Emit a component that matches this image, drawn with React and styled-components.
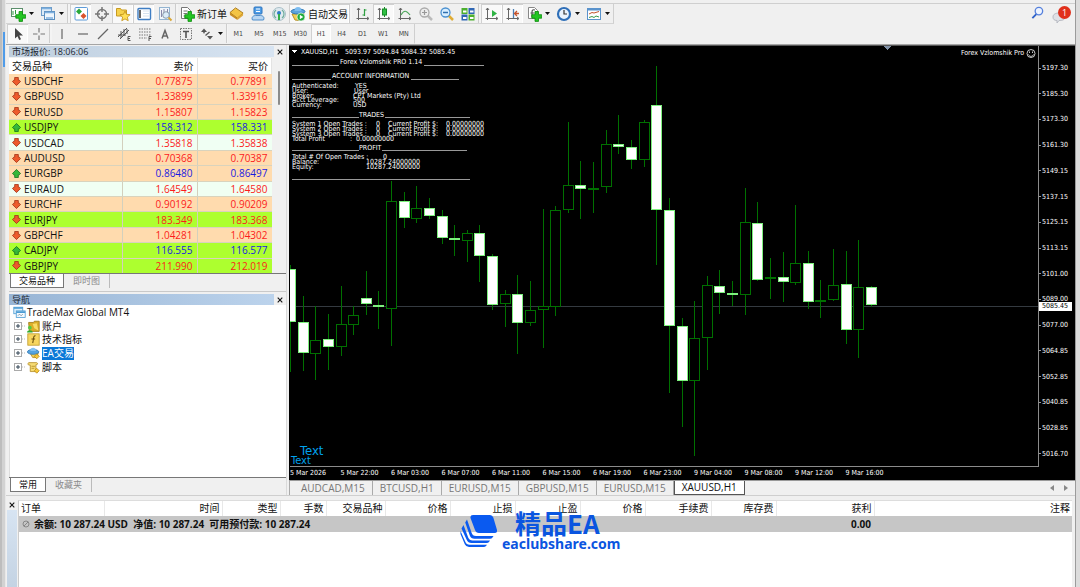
import React from "react";
import styled, { createGlobalStyle, css } from "styled-components";

const UI = `"Open Sans", "Noto Sans CJK SC", sans-serif`;
const CHART = `"DejaVu Sans Condensed", "DejaVu Sans", sans-serif`;

const GlobalStyle = createGlobalStyle`
  * { box-sizing: border-box; }
  body { margin: 0; background: #f0f0f0; font: 10px/14px ${UI}; color: #111; }
  button { font: inherit; color: inherit; margin: 0; padding: 0; border: 0; background: none; }
  table { border-collapse: collapse; border-spacing: 0; }
  svg { display: block; flex: none; }
`;

/* ---------- frame ---------- */
const Desktop = styled.div`
  display: grid;
  grid-template-columns: 6px minmax(0, 1fr) 5px;
  min-height: 100vh;
`;
const LeftEdge = styled.div`
  background: linear-gradient(90deg, #bdbdbd 0 2px, #d2d2d2 2px 5px, #e8e8e8 5px);
  padding: 32px 1px 0 3px;
`;
const EdgeMark = styled.div`
  height: 35px;
  background: #4f9be8;
`;
const RightEdge = styled.div`
  border-left: 1px solid #9b9b9b;
  background: #dcdcdc;
`;
const Window = styled.main`
  display: flex;
  flex-direction: column;
  min-width: 0;
  background: #f0f0f0;
`;
const MenuEdge = styled.div`
  height: 4px;
  border-bottom: 1px solid #cfcfcf;
`;

/* ---------- toolbars ---------- */
const Toolbar = styled.div`
  display: flex;
  align-items: stretch;
  width: max-content;
  height: 20px;
  padding-left: 1px;
  border-right: 1px solid #cfcfcf;
  border-bottom: 1px solid ${(p) => (p.$last ? "transparent" : "#d4d4d4")};
`;
const Divider = styled.span`
  width: ${(p) => p.$w || 3}px;
  border-left: 1px solid #cdcdcd;
  background: #f4f4f4;
`;
const ToolButton = styled.button`
  display: flex;
  align-items: center;
  justify-content: center;
  width: 21px;
  ${(p) => p.$on && css`background: #f9f9f9; box-shadow: inset 1px 1px 0 #d0d0d0, inset -1px 0 0 #fff;`}
`;
const MenuButton = styled(ToolButton)`
  width: 30px;
  justify-content: flex-start;
  gap: 3px;
  padding-left: 3px;
`;
const TextButton = styled(ToolButton)`
  width: ${(p) => p.$w}px;
  justify-content: flex-start;
  gap: 2px;
  padding-left: 1px;
  white-space: nowrap;
`;
const ButtonGroup = styled.div`
  display: flex;
  width: ${(p) => p.$w}px;
  & > button { flex: 1; width: auto; min-width: 0; }
`;
const Timeframe = styled(ToolButton)`
  font: 7px/10px ${CHART};
  color: #444;
`;
const ToolbarRow = styled.div`
  display: flex;
  justify-content: space-between;
`;
const Tray = styled.div`
  display: flex;
  align-items: flex-start;
  gap: 4px;
  padding: 1px 3px 0 0;
`;
const Bell = styled.button`
  position: relative;
  display: grid;
  place-items: center start;
  width: 20px;
  height: 20px;
`;
const Badge = styled.span`
  position: absolute;
  top: 1px;
  right: 1px;
  width: 13px;
  height: 13px;
  border-radius: 50%;
  background: #e0301c;
  color: #fff;
  font: 9px/13px ${UI};
  text-align: center;
`;

/* ---------- workspace ---------- */
const Workspace = styled.div`
  display: grid;
  grid-template-columns: 281px minmax(0, 1fr);
  column-gap: 2px;
  flex: 1;
  border-top: 1px solid #a5a5a5;
`;
const Side = styled.aside`
  display: flex;
  flex-direction: column;
  padding: 1px 0 3px 3px;
  border-right: 1px solid #dadada;
`;
const Panel = styled.section`
  display: flex;
  flex-direction: column;
  ${(p) => p.$grow && css`flex: 1; border-top: 1px solid #c9c9c9; margin-top: 3px; padding-top: 2px;`}
`;
const PanelTitle = styled.header`
  display: flex;
  height: 11px;
  color: #1c2833;
  & > h2 {
    flex: 1;
    margin: 0;
    padding-left: 3px;
    font: 9px/11px ${UI};
    background: ${(p) => (p.$active ? "linear-gradient(90deg,#98b5d5,#bcd3ec)" : "linear-gradient(90deg,#bfcfdf,#d7e4f2)")};
  }
`;
const CloseButton = styled.button`
  display: grid;
  place-items: center;
  width: 12px;
  height: 11px;
`;
const Quotes = styled.div`
  display: grid;
  grid-template-columns: 263px 1fr;
  height: 216px;
`;
const QuoteTable = styled.table`
  width: 100%;
  height: 216px;
  table-layout: fixed;
  background: #fff;
  line-height: 12px;
  margin-top: 1px;
  th { font-weight: 400; text-align: right; padding: 0 3px; border-right: 1px solid #e3e3e3; height: 16px; }
  th:first-child { text-align: left; }
`;
const ROW_BG = { peach: "#ffdbae", green: "#adff2f", mint: "#f0fff3" };
const QuoteRow = styled.tr`
  background: ${(p) => ROW_BG[p.$tone]};
  td {
    padding: 0 4px 0 3px;
    text-align: right;
    color: ${(p) => (p.$up ? "#1a1ae0" : "#fb1c1c")};
    border-right: 1px solid #d3d0bd;
    border-bottom: 1px solid #d9d3bd;
  }
  td:first-child { color: #111; text-align: left; }
  td:last-child { border-right: 0; }
`;
const Symbol = styled.span`
  display: flex;
  align-items: center;
  gap: 3px;
`;
const Scroll = styled.div`
  padding: 14px 0 0 6px;
`;
const Thumb = styled.div`
  width: 2px;
  height: 34px;
  border-radius: 1px;
  background: #8b8b8b;
`;
const PanelTabs = styled.div`
  display: flex;
  height: 15px;
  padding-left: 1px;
  border-top: 1px solid #777;
`;
const PanelTab = styled.button`
  padding: 0 9px;
  color: ${(p) => (p.$on ? "#111" : "#8a8a8a")};
  font-size: 9px;
  line-height: 14px;
  ${(p) =>
    p.$on
      ? css`background: #fff; border: 1px solid #777; border-top: 0; padding: 0 8px;`
      : css`border-right: 1px solid #bbb;`}
`;
const Tree = styled.ul`
  flex: 1;
  margin: 0;
  padding: 1px 0 0 3px;
  list-style: none;
  background: #fff;
  border-left: 1px solid #ddd;
`;
const TreeRows = styled.div`
  display: flex;
  flex-direction: column;
  height: 68px;
`;
const TreeItem = styled.li`
  display: flex;
  flex: 1;
  align-items: center;
  gap: ${(p) => (p.$root ? 1 : 2)}px;
  padding-left: ${(p) => (p.$root ? 0 : 1)}px;
`;
const TreeLabel = styled.span`
  line-height: 13px;
  ${(p) => p.$on && css`background: #0a78d7; color: #fff;`}
`;

/* ---------- chart ---------- */
const ChartColumn = styled.div`
  display: flex;
  flex-direction: column;
  min-width: 0;
`;
const ChartFrame = styled.figure`
  flex: 1;
  display: grid;
  grid-template: minmax(420px, 1fr) 13px / minmax(0, 1fr) 36px;
  margin: 0;
  padding: 0 0 0 1px;
  background: #000;
  color: #fff;
  font: 7px/10px ${CHART};
  border-top: 1px solid #555;
`;
const Plot = styled.div`
  border: 1px solid #8b8b8b;
  border-width: 0 1px 1px 0;
  overflow: hidden;
  & > svg { width: 100%; height: 100%; }
`;
const PriceAxis = styled.div`
  position: relative;
  display: flex;
  flex-direction: column;
  justify-content: space-between;
  padding: 17px 0 8px;
  & > span { display: flex; align-items: center; gap: 1px; }
  & > span::before { content: ""; width: 2px; height: 1px; background: #999; }
`;
const PriceTag = styled.output`
  position: absolute;
  top: 256px;
  left: 0;
  width: 33px;
  padding-left: 3px;
  background: #fff;
  color: #000;
  line-height: 9px;
`;
const TimeAxis = styled.div`
  display: flex;
  grid-column: 1 / -1;
  line-height: 13px;
  white-space: nowrap;
  & > div { display: grid; grid-template-columns: repeat(12, minmax(0, 1fr)); width: 606px; }
`;
const ChartTabs = styled.nav`
  display: flex;
  height: 15px;
  padding-left: 4px;
  border-top: 1px solid #999;
  border-left: 1px solid #aaa;
`;
const ChartTab = styled.button`
  padding: 0 7px;
  line-height: 13px;
  color: #777;
  border-right: 1px solid #aaa;
  ${(p) => p.$on && css`background: #fff; color: #111; border: 1px solid #555; border-top: 0;`}
`;
const TabScroll = styled.div`
  display: flex;
  align-items: center;
  gap: 10px;
  margin-left: auto;
  padding-right: 7px;
`;

/* ---------- terminal ---------- */
const Terminal = styled.section`
  position: relative;
  display: grid;
  grid-template-columns: 12px minmax(0, 1fr);
  min-height: 92px;
  padding-right: 3px;
  border-top: 1px solid #cfcfcf;
`;
const TerminalRail = styled.div`
  display: flex;
  flex-direction: column;
  padding: 3px 1px 0 0;
  &::after { content: ""; flex: 1; margin-left: 1px; background: linear-gradient(#d7e4f2, #c4d3e3); }
`;
const TerminalBody = styled.div`
  margin-top: 4px;
  background: #fff;
  border-left: 1px solid #ccc;
  border-top: 1px solid #ddd;
`;
const Orders = styled.table`
  width: 100%;
  table-layout: fixed;
  line-height: 15px;
  white-space: nowrap;
  th { font-weight: 400; text-align: right; padding: 0 2px; border-right: 1px solid #e8e8e8; height: 15px; }
  th:first-child { text-align: left; }
  th:last-child { border-right: 0; }
  td { height: 16px; padding: 0 3px; font-weight: 700; text-align: right; background: #c6c6c6; }
  td:first-child { text-align: left; }
`;
const Balance = styled.span`
  display: flex;
  align-items: center;
  gap: 4px;
  white-space: pre;
`;
const Watermark = styled.div`
  position: absolute;
  left: 454px;
  top: 14px;
  display: flex;
  align-items: center;
  gap: 5px;
  color: #0a55e0;
  font: 700 14px/16px "Noto Sans", sans-serif;
`;
const Brand = styled.div`
  padding-left: 13px;
  font: 700 26px/26px "Noto Sans CJK SC", sans-serif;
`;

/* ---------- icons ---------- */
const Ico = ({ s = 16, children }) => (
  <svg width={s} height={s} viewBox="0 0 16 16" fill="none" aria-hidden="true">{children}</svg>
);
const Caret = () => (
  <svg width="5" height="3" viewBox="0 0 5 3" aria-hidden="true"><path d="M0 0h5L2.5 3z" fill="#111" /></svg>
);
const Cross = () => (
  <svg width="6" height="6" viewBox="0 0 6 6" aria-hidden="true"><path d="M.7.7l4.6 4.6M5.3.7L.7 5.3" stroke="#111" strokeWidth="1.1" /></svg>
);
const plus = <path d="M9 5.500h3.500v3.200h3.200v3.500h-3.200v3.200H9v-3.200H5.800V8.700H9z" fill="#23c523" stroke="#0b8a0b" strokeWidth=".8" />;
const axes = <path d="M3.500 2v12M1.500 12.500h12M2 4l1.500-2L5 4M12 11l2 1.500-2 1.500" stroke="#666" />;
const icons = {
  newChart: <Ico><rect x="1.500" y="2.500" width="11" height="8" fill="#fff" stroke="#5b8f6b" /><path d="M3 5v4M5.500 4v4" stroke="#2b9a3e" />{plus}</Ico>,
  profiles: <Ico><rect x="1.500" y="1.500" width="10" height="8" fill="#dcebf8" stroke="#6c9cc9" /><rect x="4.500" y="5.500" width="10" height="8" fill="#eef6fd" stroke="#5a8dbd" /><path d="M4.500 6.500h10M2 2.500h9M6 12h7" stroke="#7eb0df" strokeWidth="1.500" /></Ico>,
  market: <Ico><rect x="2" y="1.500" width="12.500" height="12.500" rx="1" fill="#fff" stroke="#5c9ad8" /><path d="M6 2.500L9 5.500 6 8.500 3 5.500z" fill="#28a83a" /><path d="M10.500 7l3 3-3 3-3-3z" fill="#d9532c" /></Ico>,
  aim: <Ico><circle cx="8" cy="8" r="4.500" stroke="#777" strokeWidth="1.500" /><path d="M8 1v5M8 10v5M1 8h5M10 8h5" stroke="#777" strokeWidth="1.500" /></Ico>,
  navigator: <Ico><path d="M1.500 2.500h4l1 1.500h5v6h-10z" fill="#f6d24c" stroke="#c79a22" /><path d="M10 5l1.500 3.300 3.600.4-2.700 2.400.8 3.600-3.200-1.800-3.200 1.800.8-3.600L4.900 8.700l3.600-.4z" fill="#ffdf55" stroke="#c08f17" strokeWidth=".8" /></Ico>,
  terminal: <Ico><rect x="2" y="2.500" width="12.500" height="11" rx="1" fill="#fff" stroke="#3f7ec4" strokeWidth="1.400" /><path d="M4 4v8" stroke="#333" strokeWidth="1.500" /><path d="M7 5h6M7 7.500h6M7 10h6" stroke="#d5e2f0" /></Ico>,
  tester: <Ico><rect x="2.500" y="1.500" width="10" height="12" fill="#f1f6fb" stroke="#93b4d1" /><path d="M4.500 4v7M7 3v5M10.500 3v4" stroke="#88a" /><circle cx="9" cy="9" r="3.300" fill="#d7ebfa" fillOpacity=".8" stroke="#8a9bab" /><path d="M11.500 11.500l3 3" stroke="#d9a636" strokeWidth="2" /></Ico>,
  order: <Ico><path d="M2.500 1.500h6l3 3v8h-9z" fill="#fff" stroke="#777" /><path d="M4.500 5h4M4.500 7.500h4M4.500 10h3" stroke="#777" />{plus}</Ico>,
  gold: <Ico s={15}><path d="M1 7l6-5 8 5.500-6 5.500z" fill="#f3c443" stroke="#a9761a" /><path d="M1 7v2.500L9 15v-2z" fill="#c88d22" /><path d="M9 13v2l6-5V7.500z" fill="#e0a93a" /></Ico>,
  user: <Ico><rect x="4" y="1" width="8" height="7" rx="1" fill="#4f9ee8" stroke="#2f74bd" /><path d="M6 3h4M6 5.500h4" stroke="#fff" /><path d="M2.500 14c-1.500-3 1-4.500 3-4.500h5c2 0 4.500 1.500 3 4.500z" fill="#b9d6f2" stroke="#4f8ecb" /></Ico>,
  signal: <Ico><circle cx="8" cy="8" r="6.500" fill="#dfe9ef" stroke="#a9bfc8" /><path d="M5 12a5 5 0 010-8M11 4a5 5 0 010 8" stroke="#6fae9b" strokeWidth="1.200" /><circle cx="8" cy="7" r="2" fill="#2e7ac4" /><path d="M8 8v6" stroke="#35b04a" strokeWidth="2" /></Ico>,
  auto: <Ico><path d="M2 8l3 6 5 .5 4-7z" fill="#f1cf55" stroke="#b48d25" /><ellipse cx="8" cy="5.500" rx="7" ry="2.500" fill="#5ba3dc" stroke="#2f78b4" /><path d="M4.500 5a3.500 4 0 017 0z" fill="#7cbcf0" /><circle cx="11" cy="11" r="4" fill="#1faa3b" stroke="#fff" strokeWidth=".6" /><path d="M9.800 8.800l3.500 2.200-3.500 2.200z" fill="#fff" /></Ico>,
  bars: <Ico>{axes}<path d="M9.500 3v7M9.500 4h2M7.500 9h2" stroke="#2fa042" strokeWidth="1.200" /></Ico>,
  candles: <Ico>{axes}<path d="M8.500 1v10" stroke="#178a26" /><rect x="6.500" y="3" width="4" height="6" fill="#2fc043" stroke="#178a26" /></Ico>,
  line: <Ico>{axes}<path d="M4 9c3-5 5-5 9 0" stroke="#4aa658" strokeWidth="1.200" /></Ico>,
  zoomIn: <Ico><path d="M9.500 9.500l4.500 4.500" stroke="#bbb" strokeWidth="2.500" /><circle cx="6.500" cy="6.500" r="4.500" fill="#eee" stroke="#aaa" strokeWidth="1.300" /><path d="M4 6.500h5M6.500 4v5" stroke="#999" strokeWidth="1.200" /></Ico>,
  zoomOut: <Ico><path d="M9.500 9.500l4.500 4.500" stroke="#dfac35" strokeWidth="2.500" /><circle cx="6.500" cy="6.500" r="4.500" fill="#d8eeff" stroke="#4a90d0" strokeWidth="1.300" /><path d="M4 6.500h5" stroke="#2f6fae" strokeWidth="1.500" /></Ico>,
  tile: <Ico><rect x="1.500" y="2" width="6" height="6" fill="#4caf2f" /><rect x="8.500" y="2" width="6" height="6" fill="#2f66b4" /><rect x="1.500" y="8.500" width="6" height="6" fill="#2f66b4" /><rect x="8.500" y="8.500" width="6" height="6" fill="#4caf2f" /><path d="M3 5.500h3.500M10 5.500h3.500M3 12h3.500M10 12h3.500" stroke="#fff" strokeWidth="2" /></Ico>,
  scroll: <Ico>{axes}<path d="M8 4l5 3.500L8 11z" fill="#2fb344" /></Ico>,
  shift: <Ico>{axes}<path d="M8.500 3v9" stroke="#4a7fb5" strokeWidth="1.300" /><path d="M14 7.500h-4M12 5l-2.500 2.500L12 10" stroke="#c6542c" strokeWidth="1.300" /></Ico>,
  indicators: <Ico><path d="M2.500 1.500h6l3 3v8h-9z" fill="#fff" stroke="#888" /><path d="M9 4c-3-1-3 1-3 3v4M4.500 7h4" stroke="#555" strokeWidth="1.200" />{plus}</Ico>,
  clock: <Ico><circle cx="8" cy="8" r="6" fill="#e9f3fd" stroke="#2f6fb8" strokeWidth="2.200" /><path d="M8 4v4h3" stroke="#333" strokeWidth="1.200" /></Ico>,
  template: <Ico><rect x="1.500" y="2.500" width="13" height="11" fill="#fff" stroke="#5a93cc" /><path d="M2 3.500h12" stroke="#5a93cc" strokeWidth="2" /><path d="M3 8l3-1.500 2 .5 5-1.500" stroke="#c4532c" /><path d="M3 11.500l3-1 2 1L10 10l3 1" stroke="#3a9a4a" /></Ico>,
  cursor: <Ico><path d="M5 2v10.500l2.500-2.300 1.700 3.800 1.800-.8-1.700-3.700H13z" fill="#444" /></Ico>,
  cross: <Ico><path d="M8 2v4.500M8 9.500V14M2 8h4.500M9.500 8H14" stroke="#777" strokeWidth="1.200" /></Ico>,
  vline: <Ico><path d="M8 3v10" stroke="#666" strokeWidth="1.200" /></Ico>,
  hline: <Ico><path d="M3 8h10" stroke="#666" strokeWidth="1.200" /></Ico>,
  trend: <Ico><path d="M3 13L13 3" stroke="#666" strokeWidth="1.200" /></Ico>,
  channel: <Ico><path d="M2 11L11 2M4 13l9-9M5 5v7M8 3v7M11 3v5M2 9h8" stroke="#555" /><path d="M14.500 10.500H12v4h2.500M12 12.500h2" stroke="#555" /></Ico>,
  fib: <Ico><path d="M2 3h12M2 6h12M2 9h12M2 12h8" stroke="#777" strokeDasharray="1.500 1" /><path d="M14.500 10.500H12v4.500M12 12.500h2" stroke="#555" /></Ico>,
  letter: <Ico><path d="M5 12.500L8 4.500l3 8M6 10h4" stroke="#666" strokeWidth="1.500" /></Ico>,
  label: <Ico><rect x="2.500" y="2.500" width="11" height="11" stroke="#777" strokeDasharray="1.500 1" /><path d="M5 5.500h6M8 5.500V12" stroke="#555" strokeWidth="1.600" /></Ico>,
  arrows: <Ico><path d="M5 2.500l3 3.500H6l-1 2-1-2H2z" fill="#555" /><path d="M11 13.500L8 10h6z" fill="#555" /><path d="M6.500 9.500l4-3.500" stroke="#555" strokeWidth="1.300" /></Ico>,
  search: <Ico s={15}><path d="M7 9.500L2.500 14" stroke="#2f62c9" strokeWidth="2" /><circle cx="9.500" cy="6.500" r="4" fill="#eef4ff" stroke="#5580dc" strokeWidth="1.400" /></Ico>,
  bubble: <Ico><path d="M1 10c0-3 3-4 6-4s6 1 6 4-3 3.500-6 3.500L5 16v-2.500C2 13.500 1 12 1 10z" fill="#dfe1e6" stroke="#b7bac2" /></Ico>,
};
const TickArrow = ({ up }) => (
  <svg width="9" height="9" viewBox="0 0 10 10" aria-hidden="true">
    <path d={up ? "M5 .5L9.500 5 8 6.500H7v3H3v-3H2L.5 5z" : "M5 9.500L.5 5 2 3.500h1v-3h4v3h1L9.500 5z"} fill={up ? "#35b83a" : "#ee5a2c"} stroke={up ? "#14701c" : "#9e2f12"} strokeWidth=".9" />
  </svg>
);
const Expander = () => (
  <svg width="11" height="9" viewBox="0 0 11 9" aria-hidden="true">
    <rect x=".5" y=".5" width="7" height="7" fill="#fff" stroke="#aaa" /><path d="M2 4h4M4 2v4" stroke="#345" /><path d="M8 4h3" stroke="#bbb" strokeDasharray="1 1" />
  </svg>
);
const treeIcons = {
  root: <Ico s={13}><rect x="1" y="1.500" width="11" height="8" fill="#dff0fb" stroke="#4a9bd4" /><rect x="4" y="6" width="11" height="8" fill="#f5fbff" stroke="#4a9bd4" /><path d="M1 2.500h11M4 7.500h11" stroke="#4a9bd4" strokeWidth="2" /><path d="M6 12l2-2 2 2 2-2" stroke="#789" /></Ico>,
  accounts: <Ico s={13}><path d="M2 3h6l1-1.500h6V14H3z" fill="#dcae28" stroke="#9c7612" /><path d="M7 5l5-1 2 9-5-3z" fill="#f8dc65" /><circle cx="3.500" cy="9.500" r="2.300" fill="#53c943" /><path d="M0 15.500c0-4 7-4 7 0z" fill="#2fab2f" /></Ico>,
  indicators: <Ico s={13}><rect x="1" y="1" width="14" height="14" fill="#f7d660" stroke="#bf9925" /><path d="M10.500 3.500c-3-.5-2 3-3.500 9M5.500 7.500H10" stroke="#6b4f0d" strokeWidth="1.300" /></Ico>,
  experts: <Ico s={13}><path d="M4 8l3 5h5l2-6z" fill="#f1cf55" stroke="#b48d25" /><ellipse cx="7.500" cy="6" rx="7" ry="3" fill="#55a3df" stroke="#2f78b4" /><path d="M4 5a3.500 4 0 017 0z" fill="#82c1f2" /><path d="M12 8.500l3 3-3 3-3-3z" fill="#f8c93a" stroke="#b98b18" /></Ico>,
  scripts: <Ico s={13}><path d="M2 2h10c2 1 1 3-1 2.500V13H4V5H2C1 4 1 3 2 2z" fill="#f6dc75" stroke="#b48d25" /><path d="M5.500 6.500H10M5.500 9H9" stroke="#b48d25" /><path d="M12 9l3 3-3 3-3-3z" fill="#f8c93a" stroke="#b98b18" /></Ico>,
};

/* ---------- data ---------- */
const quotes = [
  ["USDCHF", "0.77875", "0.77891", "peach", 0], ["GBPUSD", "1.33899", "1.33916", "peach", 0],
  ["EURUSD", "1.15807", "1.15823", "peach", 0], ["USDJPY", "158.312", "158.331", "green", 1],
  ["USDCAD", "1.35818", "1.35838", "mint", 0], ["AUDUSD", "0.70368", "0.70387", "peach", 0],
  ["EURGBP", "0.86480", "0.86497", "peach", 1], ["EURAUD", "1.64549", "1.64580", "mint", 0],
  ["EURCHF", "0.90192", "0.90209", "peach", 0], ["EURJPY", "183.349", "183.368", "green", 0],
  ["GBPCHF", "1.04281", "1.04302", "peach", 0], ["CADJPY", "116.555", "116.577", "green", 1],
  ["GBPJPY", "211.990", "212.019", "green", 0],
];
// Each candle: high, body top, body bottom, low (plot pixels) and 1 for a falling (filled) body.
const candles = [
  [219, 223, 276, 326, 1], [250, 276, 307, 325, 1], [260, 294, 308, 334, 0], [268, 293, 301, 324, 1],
  [240, 278, 301, 310, 0], [260, 269, 279, 289, 0], [225, 252, 258, 269, 1], [245, 259, 261, 283, 1],
  [135, 155, 263, 300, 0], [146, 155, 172, 182, 1], [140, 162, 173, 177, 0], [152, 162, 170, 173, 1],
  [164, 170, 192, 198, 1], [179, 192, 194, 210, 1], [184, 187, 195, 216, 0], [179, 187, 210, 236, 1],
  [208, 210, 259, 264, 1], [244, 248, 258, 281, 0], [229, 248, 277, 308, 1], [235, 264, 277, 280, 0],
  [163, 260, 264, 302, 0], [160, 164, 261, 270, 0], [76, 139, 164, 167, 0], [115, 139, 143, 173, 1],
  [116, 142, 143, 167, 0], [84, 98, 141, 147, 0], [69, 98, 101, 108, 1], [94, 101, 114, 123, 1],
  [74, 76, 114, 121, 0], [20, 59, 164, 219, 1], [152, 164, 280, 347, 1], [272, 280, 335, 381, 1],
  [255, 292, 335, 410, 0], [230, 239, 292, 324, 0], [224, 240, 247, 268, 1], [235, 247, 249, 260, 1],
  [142, 176, 249, 269, 0], [156, 177, 234, 235, 1], [212, 231, 233, 253, 0], [206, 231, 236, 256, 1],
  [159, 217, 237, 239, 0], [205, 217, 256, 263, 1], [234, 254, 255, 272, 0], [203, 239, 254, 255, 0],
  [205, 238, 284, 298, 1], [194, 241, 284, 312, 0], [240, 241, 259, 261, 1],
];
const STEP = 12.63;
const chartLabels = [
  [11, 8, "XAUUSD,H1"], [55, 8, "5093.97 5094.84 5084.32 5085.45"],
  [50, 18, "Forex Vzlomshik PRO 1.14"], [42, 32, "ACCOUNT INFORMATION"],
  [2, 42, "Authenticated:"], [65, 42, "YES"], [2, 47, "User:"], [64, 47, "User"],
  [2, 52, "Broker:"], [63, 52, "CPT Markets (Pty) Ltd"], [2, 56, "Acct Leverage:"], [63, 56, "500"],
  [2, 61, "Currency:"], [63, 61, "USD"], [69, 71, "TRADES"],
  ...[1, 2, 3].flatMap((n, i) => {
    const y = 80 + i * 5;
    return [[2, y, `System ${n} Open Trades :`], [86, y, "0"], [98, y, "Current Profit $:"], [156, y, "0.00000000"]];
  }),
  [2, 95, "Total Profit"], [60, 95, ":"], [66, 95, "0.00000000"], [69, 104, "PROFIT"],
  [2, 113, "Total # Of Open Trades :"], [93, 113, "0"],
  [2, 118, "Balance:"], [76, 118, "10287.24000000"], [2, 123, "Equity:"], [76, 123, "10287.24000000"],
];
const rules = [
  [2, 49, 19], [134, 194, 19], [2, 41, 33], [121, 169, 33], [2, 69, 71], [95, 180, 71],
  [2, 69, 104], [92, 177, 104], [2, 180, 133],
];
const prices = ["5197.30", "5185.30", "5173.30", "5161.30", "5149.15", "5137.15", "5125.15", "5113.15", "5101.00", "5089.00", "5077.00", "5064.85", "5052.85", "5040.85", "5028.85", "5016.70"];
const times = ["5 Mar 2026", "5 Mar 22:00", "6 Mar 03:00", "6 Mar 07:00", "6 Mar 11:00", "6 Mar 15:00", "6 Mar 19:00", "6 Mar 23:00", "9 Mar 04:00", "9 Mar 08:00", "9 Mar 12:00", "9 Mar 16:00"];
const orderCols = [["订单", 85], ["时间", 118], ["类型", 58], ["手数", 46], ["交易品种", 59], ["价格", 65], ["止损", 65], ["止盈", 65], ["价格", 65], ["手续费", 66], ["库存费", 65], ["获利", 98], ["注释"]];

const Tool = ({ icon, on, label }) => <ToolButton $on={on} aria-label={label || icon}>{icons[icon]}</ToolButton>;
const Menu = ({ icon }) => <MenuButton aria-label={icon}>{icons[icon]}<Caret /></MenuButton>;

function ChartDrawing() {
  return (
    <svg role="img" aria-label="XAUUSD,H1" shapeRendering="crispEdges">
      <line x1="0" x2="100%" y1="260.5" y2="260.5" stroke="#343a40" />
      {candles.map(([hi, top, bottom, lo, down], i) => {
        const x = Math.round(i * STEP);
        return (
          <g key={i}>
            <path d={`M${x + 0.5} ${hi}V${lo}`} stroke="#007000" />
            <rect x={x - 4.5} y={top + 0.5} width="10" height={Math.max(bottom - top - 1, 1)} fill={down ? "#fff" : "#000"} stroke={down ? "#7df07d" : "#007000"} />
          </g>
        );
      })}
      {rules.map(([a, b, y]) => <line key={`${a}-${y}`} x1={a} x2={b} y1={y + 0.5} y2={y + 0.5} stroke="#999" />)}
      <path d="M2 4h5L4.500 7z" fill="#fff" />
      <path d="M593 0h8l-4 4z" fill="#8090a5" />
      <g fill="#fff">{chartLabels.map(([x, y, t], i) => <text key={i} x={x} y={y}>{t}</text>)}</g>
      <g fill="#00a2ee">
        <text x="10" y="409" fontSize="13">Text</text>
        <text x="1" y="418" fontSize="11">Text</text>
      </g>
      <text x="100%" dx="-14" y="9" textAnchor="end" fill="#fff">Forex Vzlomshik Pro</text>
      <svg x="100%" overflow="visible" shapeRendering="auto">
        <g fill="none" stroke="#ddd" strokeWidth=".9">
          <circle cx="-7" cy="7.500" r="4" /><path d="M-9.500 8.500c1 2.500 4 2.500 5 0M-8.500 5.500v1.500M-5.500 5.500v1.500" />
        </g>
      </svg>
    </svg>
  );
}

export default function App() {
  return (
    <Desktop>
      <GlobalStyle />
      <LeftEdge><EdgeMark /></LeftEdge>
      <Window>
        <MenuEdge />
        <ToolbarRow>
          <div>
            <Toolbar>
              <Menu icon="newChart" /><Menu icon="profiles" />
              <Divider />
              <Tool icon="market" on /><Tool icon="aim" /><Tool icon="navigator" on /><Tool icon="terminal" on /><Tool icon="tester" />
              <Divider />
              <TextButton $w={48}>{icons.order}新订单</TextButton>
              <Tool icon="gold" /><Tool icon="user" /><Tool icon="signal" />
              <TextButton $w={60} $on>{icons.auto}自动交易</TextButton>
              <Divider />
              <Tool icon="bars" /><Tool icon="candles" on /><Tool icon="line" />
              <Tool icon="zoomIn" /><Tool icon="zoomOut" /><Tool icon="tile" />
              <Divider />
              <Tool icon="scroll" on /><Tool icon="shift" on />
              <Menu icon="indicators" /><Menu icon="clock" /><Menu icon="template" />
            </Toolbar>
            <Toolbar $last>
              <Tool icon="cursor" on /><Tool icon="cross" />
              <Divider />
              <ButtonGroup $w={144}>
                {["vline", "hline", "trend", "channel", "fib", "letter", "label"].map((n) => <Tool key={n} icon={n} />)}
              </ButtonGroup>
              <Menu icon="arrows" />
              <Divider $w={2} />
              <ButtonGroup $w={186}>
                {["M1", "M5", "M15", "M30", "H1", "H4", "D1", "W1", "MN"].map((t) => <Timeframe key={t} $on={t === "H1"}>{t}</Timeframe>)}
              </ButtonGroup>
            </Toolbar>
          </div>
          <Tray>
            <Tool icon="search" />
            <Bell aria-label="messages">{icons.bubble}<Badge>1</Badge></Bell>
          </Tray>
        </ToolbarRow>

        <Workspace>
          <Side>
            <Panel>
              <PanelTitle><h2>市场报价: 18:06:06</h2><CloseButton aria-label="close"><Cross /></CloseButton></PanelTitle>
              <Quotes>
                <QuoteTable>
                  <colgroup><col style={{ width: 113 }} /><col style={{ width: 75 }} /><col /></colgroup>
                  <thead><tr><th>交易品种</th><th>卖价</th><th>买价</th></tr></thead>
                  <tbody>
                    {quotes.map(([s, bid, ask, tone, up]) => (
                      <QuoteRow key={s} $tone={tone} $up={up}>
                        <td><Symbol><TickArrow up={up} />{s}</Symbol></td><td>{bid}</td><td>{ask}</td>
                      </QuoteRow>
                    ))}
                  </tbody>
                </QuoteTable>
                <Scroll><Thumb /></Scroll>
              </Quotes>
              <PanelTabs><PanelTab $on>交易品种</PanelTab><PanelTab>即时图</PanelTab></PanelTabs>
            </Panel>
            <Panel $grow>
              <PanelTitle $active><h2>导航</h2><CloseButton aria-label="close"><Cross /></CloseButton></PanelTitle>
              <Tree>
                <TreeRows>
                  <TreeItem $root>{treeIcons.root}<TreeLabel>TradeMax Global MT4</TreeLabel></TreeItem>
                  <TreeItem><Expander />{treeIcons.accounts}<TreeLabel>账户</TreeLabel></TreeItem>
                  <TreeItem><Expander />{treeIcons.indicators}<TreeLabel>技术指标</TreeLabel></TreeItem>
                  <TreeItem><Expander />{treeIcons.experts}<TreeLabel $on>EA交易</TreeLabel></TreeItem>
                  <TreeItem><Expander />{treeIcons.scripts}<TreeLabel>脚本</TreeLabel></TreeItem>
                </TreeRows>
              </Tree>
              <PanelTabs><PanelTab $on>常用</PanelTab><PanelTab>收藏夹</PanelTab></PanelTabs>
            </Panel>
          </Side>

          <ChartColumn>
            <ChartFrame>
              <Plot><ChartDrawing /></Plot>
              <PriceAxis>
                {prices.map((p) => <span key={p}>{p}</span>)}
                <PriceTag>5085.45</PriceTag>
              </PriceAxis>
              <TimeAxis><div>{times.map((t) => <span key={t}>{t}</span>)}</div></TimeAxis>
            </ChartFrame>
            <ChartTabs>
              {["AUDCAD,M15", "BTCUSD,H1", "EURUSD,M15", "GBPUSD,M15", "EURUSD,M15", "XAUUSD,H1"].map((t, i) => (
                <ChartTab key={i} $on={i === 5}>{t}</ChartTab>
              ))}
              <TabScroll>
                <svg width="4" height="6" viewBox="0 0 4 6"><path d="M4 0v6L0 3z" fill="#888" /></svg>
                <svg width="4" height="6" viewBox="0 0 4 6"><path d="M0 0v6l4-3z" fill="#888" /></svg>
              </TabScroll>
            </ChartTabs>
          </ChartColumn>
        </Workspace>

        <Terminal>
          <TerminalRail><CloseButton aria-label="close"><Cross /></CloseButton></TerminalRail>
          <TerminalBody>
            <Orders>
              <colgroup>{orderCols.map(([, w], i) => <col key={i} style={{ width: w }} />)}</colgroup>
              <thead><tr>{orderCols.map(([n], i) => <th key={i}>{n}</th>)}</tr></thead>
              <tbody>
                <tr>
                  <td colSpan={11}>
                    <Balance>
                      <svg width="8" height="8" viewBox="0 0 8 8" fill="none" stroke="#888"><circle cx="4" cy="4" r="3" /><path d="M2 6l4-4" /></svg>
                      {"余额: 10 287.24 USD  净值: 10 287.24  可用预付款: 10 287.24"}
                    </Balance>
                  </td>
                  <td>0.00</td><td />
                </tr>
              </tbody>
            </Orders>
          </TerminalBody>
          <Watermark>
            <svg width="37" height="32" viewBox="0 0 37 32" fill="#0a5af0" aria-hidden="true">
              <path d="M13 0h17q2.500 0 3.300 2.500L37 15q.5 3-2.500 3H19q-3 0-4-3L10.500 3Q10 0 13 0z" />
              <path d="M7 4.500l4.500 13q1 3.500 4.500 3.500h17.500l-1 1.500q-.8 1.200-2.500 1.200H14.500q-3.500 0-4.700-3.300L5.200 7.500z" />
              <path d="M3.500 10l4.700 12.500q1.200 3 4.300 3H30l-1 1.500q-.7 1-2.500 1H11.500q-3.500 0-4.700-3L1.500 13.500z" />
              <path d="M.5 16l4.700 10.500q1.300 3.200 4.300 3.200h17.500l-1 1.300q-.7 1-2.500 1H9q-3 0-4.200-2.700L.5 19z" />
            </svg>
            <div><Brand>精品EA</Brand>eaclubshare.com</div>
          </Watermark>
        </Terminal>
      </Window>
      <RightEdge />
    </Desktop>
  );
}
